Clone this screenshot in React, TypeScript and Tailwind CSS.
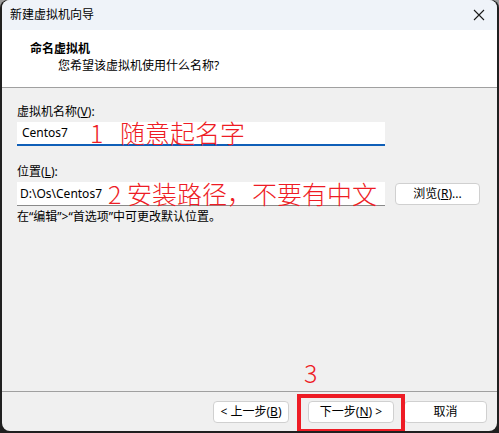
import React from 'react';

const ui = { fontFamily: '"Noto Sans", "Noto Sans CJK SC", sans-serif' };
const red = { fontFamily: '"Noto Sans CJK SC", sans-serif' };

function Btn({
  children,
  className = '',
}: {
  children: React.ReactNode;
  className?: string;
}) {
  return (
    <button
      type="button"
      className={`flex h-[22px] items-center justify-center rounded-[4px] border border-[#d0d0d0] bg-white text-[12px] text-black ${className}`}
    >
      {children}
    </button>
  );
}

export default function App() {
  return (
    <div className="h-[433px] w-[499px] overflow-hidden bg-[#9c9c9c]" style={ui}>
      <div className="h-full w-full bg-[#202020] pb-[2px] pl-[2px] pr-[2px] rounded-t-[8px]">
        <div className="relative flex h-full flex-col overflow-hidden rounded-[8px] bg-[#f0f0f0]">
          {/* title bar */}
          <div className="flex h-[30px] shrink-0 items-center justify-between bg-[#eff3f9] pl-[8px] pr-[10px]">
            <span className="text-[12px] text-black">新建虚拟机向导</span>
            <svg width="12" height="12" viewBox="0 0 12 12" className="mr-[2px]">
              <path d="M1 1L11 11M11 1L1 11" stroke="#1a1a1a" strokeWidth="1.1" />
            </svg>
          </div>

          {/* header */}
          <div className="h-[58px] shrink-0 border-b border-[#a0a0a0] bg-white pl-[28px] pt-[11px]">
            <div className="text-[12px] font-bold leading-[16px] text-black">命名虚拟机</div>
            <div className="pl-[28px] text-[12px] leading-[17px] text-black">
              您希望该虚拟机使用什么名称?
            </div>
          </div>

          {/* body */}
          <div className="flex flex-1 flex-col px-[15px] pt-[16px]">
            <div className="text-[12px] leading-[16px] text-black">
              虚拟机名称(<span className="underline">V</span>):
            </div>
            <div className="mt-[2px] flex h-[24px] w-[368px] items-center border-b-2 border-[#0f5fb8] bg-white pl-[5px] text-[12px] text-black">
              Centos7
            </div>

            <div className="mt-[18px] text-[12px] leading-[16px] text-black">
              位置(<span className="underline">L</span>):
            </div>
            <div className="mt-[2px] flex items-center gap-[10px]">
              <div className="flex h-[24px] w-[368px] items-center border-b border-[#8a8a8a] bg-white pl-[3px] text-[12px] text-black">
                D:\Os\Centos7
              </div>
              <Btn className="w-[85px]">
                浏览(<span className="underline">R</span>)...
              </Btn>
            </div>
            <div className="mt-[3px] text-[12px] leading-[16px] text-black">
              在“编辑”&gt;“首选项”中可更改默认位置。
            </div>
          </div>

          {/* footer */}
          <div className="flex h-[40px] shrink-0 items-start justify-end gap-[19px] border-t border-[#a0a0a0] pr-[10px] pt-[9px]">
            <Btn className="w-[76px]">
              &lt; 上一步(<span className="underline">B</span>)
            </Btn>
            <div className="flex gap-[10px]">
              <Btn className="w-[86px] border-[#0067c0]">
                下一步(<span className="underline">N</span>) &gt;
              </Btn>
              <Btn className="w-[83px]">取消</Btn>
            </div>
          </div>

          {/* annotations */}
          <div
            className="absolute left-[88px] top-[120px] text-[25px] font-light leading-[25px] text-[#ee1c25]"
            style={red}
          >
            1&nbsp;&nbsp;&nbsp;随意起名字
          </div>
          <div
            className="absolute left-[106px] top-[181px] text-[25px] font-light leading-[25px] text-[#ee1c25]"
            style={red}
          >
            2 安装路径，不要有中文
          </div>
          <div
            className="absolute left-[302px] top-[360px] text-[25px] font-light leading-[25px] text-[#ee1c25]"
            style={red}
          >
            3
          </div>
          <div className="absolute left-[295px] top-[394px] h-[39px] w-[108px] border-[4px] border-[#ee1c25]" />
        </div>
      </div>
    </div>
  );
}
